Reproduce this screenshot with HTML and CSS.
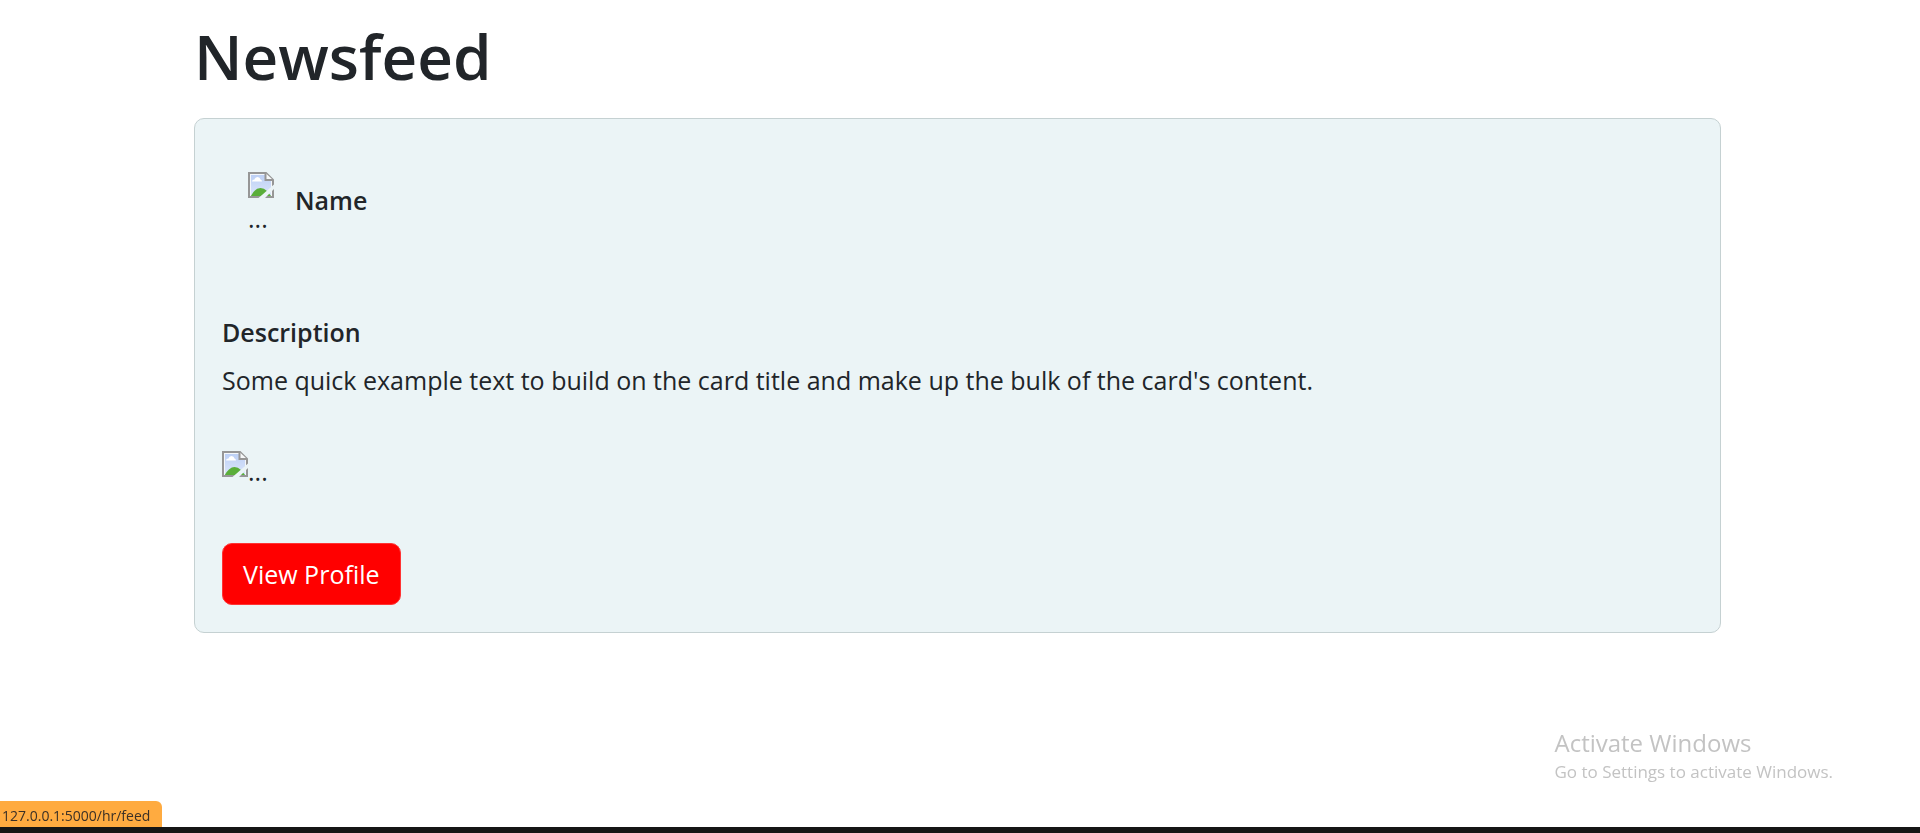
FILE: index.html
```html
<!DOCTYPE html>
<html lang="en">
<head>
<meta charset="utf-8">
<title>Newsfeed</title>
<link rel="stylesheet" href="styles.css">
</head>
<body>
<svg class="sprite" aria-hidden="true">
  <defs>
    <linearGradient id="sky" x1="0" y1="0" x2="0" y2="1">
      <stop offset="0" stop-color="#bdd0f5"/>
      <stop offset="1" stop-color="#dbe6fb"/>
    </linearGradient>
    <symbol id="missing" viewBox="0 0 26 26">
      <path d="M1 1H18L25 8V25H1Z" fill="#f4f7fa"/>
      <path d="M3 3H17V9H23V24H3Z" fill="url(#sky)"/>
      <path d="M4 9.500Q4 7.500 6.500 7.500Q7 5 9.500 5Q12 5 12.500 7.500Q14 8 14 9.500Z" fill="#fff"/>
      <path d="M2.500 24.500Q7 16 12.500 16Q16 16 19 19L23.500 24.500Z" fill="#5aae3a"/>
      <path d="M1 25V1H18L25 8V25Z" fill="none" stroke="#969696" stroke-width="2"/>
      <path d="M17.500 1V8H25" fill="#f6f8f9" stroke="#969696" stroke-width="2"/>
      <path d="M10.500 26L26 12.500V17L17 26Z" fill="#ebf4f6"/>
    </symbol>
  </defs>
</svg>
<main class="feed">
  <h1 class="feed-title">Newsfeed</h1>
  <article class="card">
    <header class="author">
      <div class="avatar">
        <svg class="missing-image" aria-hidden="true"><use href="#missing"/></svg>
        <span class="alt-text">...</span>
      </div>
      <h2 class="card-heading">Name</h2>
    </header>
    <h2 class="card-heading">Description</h2>
    <p class="card-text">Some quick example text to build on the card title and make up the bulk of the card's content.</p>
    <div class="picture">
      <svg class="missing-image" aria-hidden="true"><use href="#missing"/></svg>
      <span class="alt-text">...</span>
    </div>
    <a class="button" href="#">View Profile</a>
  </article>
</main>
<aside class="watermark">
  <p class="watermark-title">Activate Windows</p>
  <p class="watermark-text">Go to Settings to activate Windows.</p>
</aside>
<footer class="status">
  <span class="status-url">127.0.0.1:5000/hr/feed</span>
</footer>
</body>
</html>
```
FILE: styles.css
```css
* {
  box-sizing: border-box;
}

body {
  margin: 0;
  min-height: 100vh;
  background: #fff;
  color: #212529;
  font-family: "Open Sans", "Noto Sans", sans-serif;
  font-size: 25px;
  line-height: 40px;
}

h1, h2, p {
  margin: 0;
}

.sprite {
  position: absolute;
  width: 0;
  height: 0;
}

.feed {
  padding: 16px 199px 0 194px;
}

.feed-title {
  margin-bottom: 22px;
  font-size: 62px;
  font-weight: 600;
  line-height: 80px;
}

.card {
  padding: 27px;
  border: 1px solid #c5d1d2;
  border-radius: 10px;
  background: #ebf4f6;
}

.author {
  display: flex;
  align-items: flex-start;
  gap: 20px;
  padding: 26px;
  margin-bottom: 52px;
}

.avatar {
  display: flex;
  flex-direction: column;
  width: 27px;
}

.author .card-heading {
  padding-top: 12px;
}

.missing-image {
  display: block;
  flex: none;
  width: 26px;
  height: 26px;
}

.card-heading {
  font-size: 25px;
  font-weight: 600;
  line-height: 32px;
}

.card-text {
  margin: 12px 0 51px;
}

.picture {
  display: flex;
  align-items: flex-start;
  height: 44px;
  margin-bottom: 48px;
}

.button {
  display: inline-block;
  padding: 10px 20px;
  border: 1px solid #f33;
  border-radius: 10px;
  background: #f00;
  color: #fff;
  text-decoration: none;
}

.watermark {
  position: fixed;
  right: 87px;
  bottom: 48px;
  color: #c3c3c3;
}

.watermark-title {
  font-size: 24px;
  line-height: 32px;
}

.watermark-text {
  font-size: 17px;
  line-height: 26px;
}

.status {
  position: fixed;
  right: 0;
  bottom: 0;
  left: 0;
  display: flex;
  border-bottom: 6px solid #151515;
}

.status-url {
  padding: 4px 12px 0 2px;
  border-top-right-radius: 6px;
  background: #ffab40;
  color: #3b3026;
  font-size: 14px;
  line-height: 22px;
}
```
